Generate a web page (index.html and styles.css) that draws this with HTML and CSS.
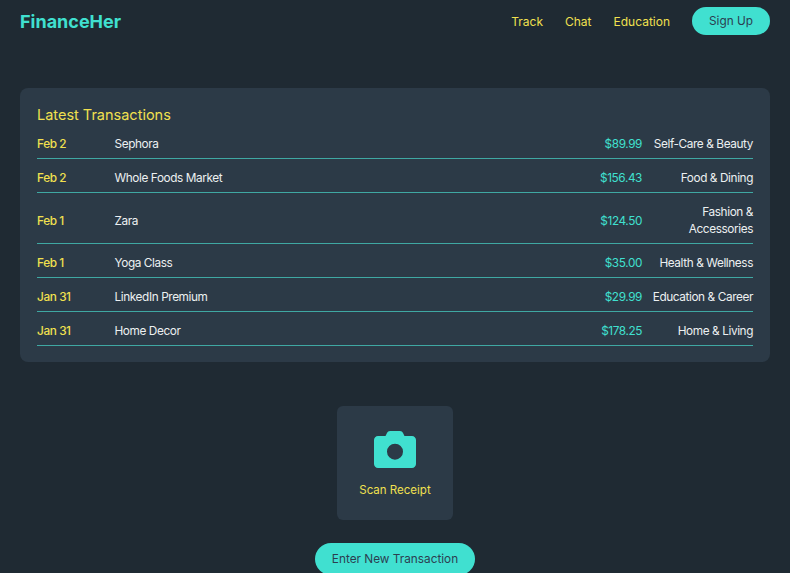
FILE: index.html
```html
<!DOCTYPE html>
<html lang="en">
<head>
    <meta charset="UTF-8">
    <meta name="viewport" content="width=device-width, initial-scale=1.0">
    <title>FinanceHer</title>
    <link rel="stylesheet" href="styles.css">
</head>
<body>

    <!-- Top navigation -->
    <header class="top-nav">
        <div class="logo">FinanceHer</div>
        <nav class="nav-links">
            <a href="#">Track</a>
            <a href="#">Chat</a>
            <a href="#">Education</a>
            <button class="signup-btn">Sign Up</button>
        </nav>
    </header>

    <!-- Latest transactions -->
    <section class="transactions-card">
        <h2>Latest Transactions</h2>
        <div class="tx-row">
            <span class="tx-date">Feb 2</span>
            <span class="tx-name">Sephora</span>
            <span class="tx-amount">$89.99</span>
            <span class="tx-category">Self-Care &amp; Beauty</span>
        </div>
        <div class="tx-row">
            <span class="tx-date">Feb 2</span>
            <span class="tx-name">Whole Foods Market</span>
            <span class="tx-amount">$156.43</span>
            <span class="tx-category">Food &amp; Dining</span>
        </div>
        <div class="tx-row">
            <span class="tx-date">Feb 1</span>
            <span class="tx-name">Zara</span>
            <span class="tx-amount">$124.50</span>
            <span class="tx-category">Fashion &amp; Accessories</span>
        </div>
        <div class="tx-row">
            <span class="tx-date">Feb 1</span>
            <span class="tx-name">Yoga Class</span>
            <span class="tx-amount">$35.00</span>
            <span class="tx-category">Health &amp; Wellness</span>
        </div>
        <div class="tx-row">
            <span class="tx-date">Jan 31</span>
            <span class="tx-name">LinkedIn Premium</span>
            <span class="tx-amount">$29.99</span>
            <span class="tx-category">Education &amp; Career</span>
        </div>
        <div class="tx-row">
            <span class="tx-date">Jan 31</span>
            <span class="tx-name">Home Decor</span>
            <span class="tx-amount">$178.25</span>
            <span class="tx-category">Home &amp; Living</span>
        </div>
    </section>

    <!-- Actions -->
    <section class="actions">
        <div class="scan-card">
            <svg class="camera-icon" viewBox="0 0 42 37" width="42" height="37" aria-hidden="true">
                <path fill-rule="evenodd" d="M4 5h7.500l1.500-3c.5-1.200 1.700-2 3-2h10c1.300 0 2.500.8 3 2l1.500 3H38c2.200 0 4 1.800 4 4v24c0 2.200-1.800 4-4 4H4c-2.200 0-4-1.800-4-4V9c0-2.200 1.800-4 4-4zm17 7.700a8 8 0 1 0 0 16 8 8 0 0 0 0-16z"/>
            </svg>
            <span class="scan-label">Scan Receipt</span>
        </div>
        <button class="new-tx-btn">Enter New Transaction</button>
    </section>

</body>
</html>
```

FILE: styles.css
```css
html, body {
    height: 573px;
    overflow: hidden;
}

body {
    font-family: Inter, "Liberation Sans", sans-serif;
    margin: 0;
    padding: 0;
    background-color: #1f2a33;
    color: #ecf0f1;
}

.top-nav {
    display: flex;
    justify-content: space-between;
    align-items: center;
    padding: 7px 20px 0;
    height: 28px;
}

.logo {
    font-size: 18px;
    font-weight: 700;
    color: #40e0d0;
}

.nav-links {
    display: flex;
    align-items: center;
    gap: 22px;
}

.nav-links a {
    font-size: 12px;
    color: #f1e04f;
    text-decoration: none;
}

.signup-btn, .new-tx-btn {
    font-family: Inter, sans-serif;
    font-size: 11.8px;
    color: #2c3e50;
    background-color: #40e0d0;
    border: none;
    border-radius: 20px;
}

.signup-btn {
    width: 78px;
    height: 28px;
}

.transactions-card {
    margin: 53px 20px 0;
    padding: 17px 17px 16px;
    background-color: #2c3a47;
    border-radius: 8px;
}

.transactions-card h2 {
    margin: 0 0 1px;
    font-size: 14.5px;
    line-height: 19px;
    font-weight: 400;
    color: #f1e04f;
}

.tx-row {
    display: flex;
    align-items: center;
    padding: 11px 0 5px;
    font-size: 11.8px;
    letter-spacing: -0.4px;
    line-height: 17px;
    border-bottom: 1px solid #3fa8a3;
}

.tx-date {
    width: 77.5px;
    font-weight: 500;
    color: #f1e04f;
}

.tx-name {
    flex: 1;
}

.tx-amount {
    color: #40e0d0;
}

.tx-category {
    width: 101px;
    margin-left: 10px;
    text-align: right;
}

.actions {
    display: flex;
    flex-direction: column;
    align-items: center;
    margin-top: 44px;
}

.scan-card {
    display: flex;
    flex-direction: column;
    align-items: center;
    width: 116px;
    height: 114px;
    padding-top: 25px;
    box-sizing: border-box;
    background-color: #2c3a47;
    border-radius: 6px;
}

.camera-icon {
    fill: #40e0d0;
}

.scan-label {
    margin-top: 15px;
    font-size: 11.5px;
    color: #f1e04f;
}

.new-tx-btn {
    width: 160px;
    height: 32px;
    margin-top: 23px;
}
```
